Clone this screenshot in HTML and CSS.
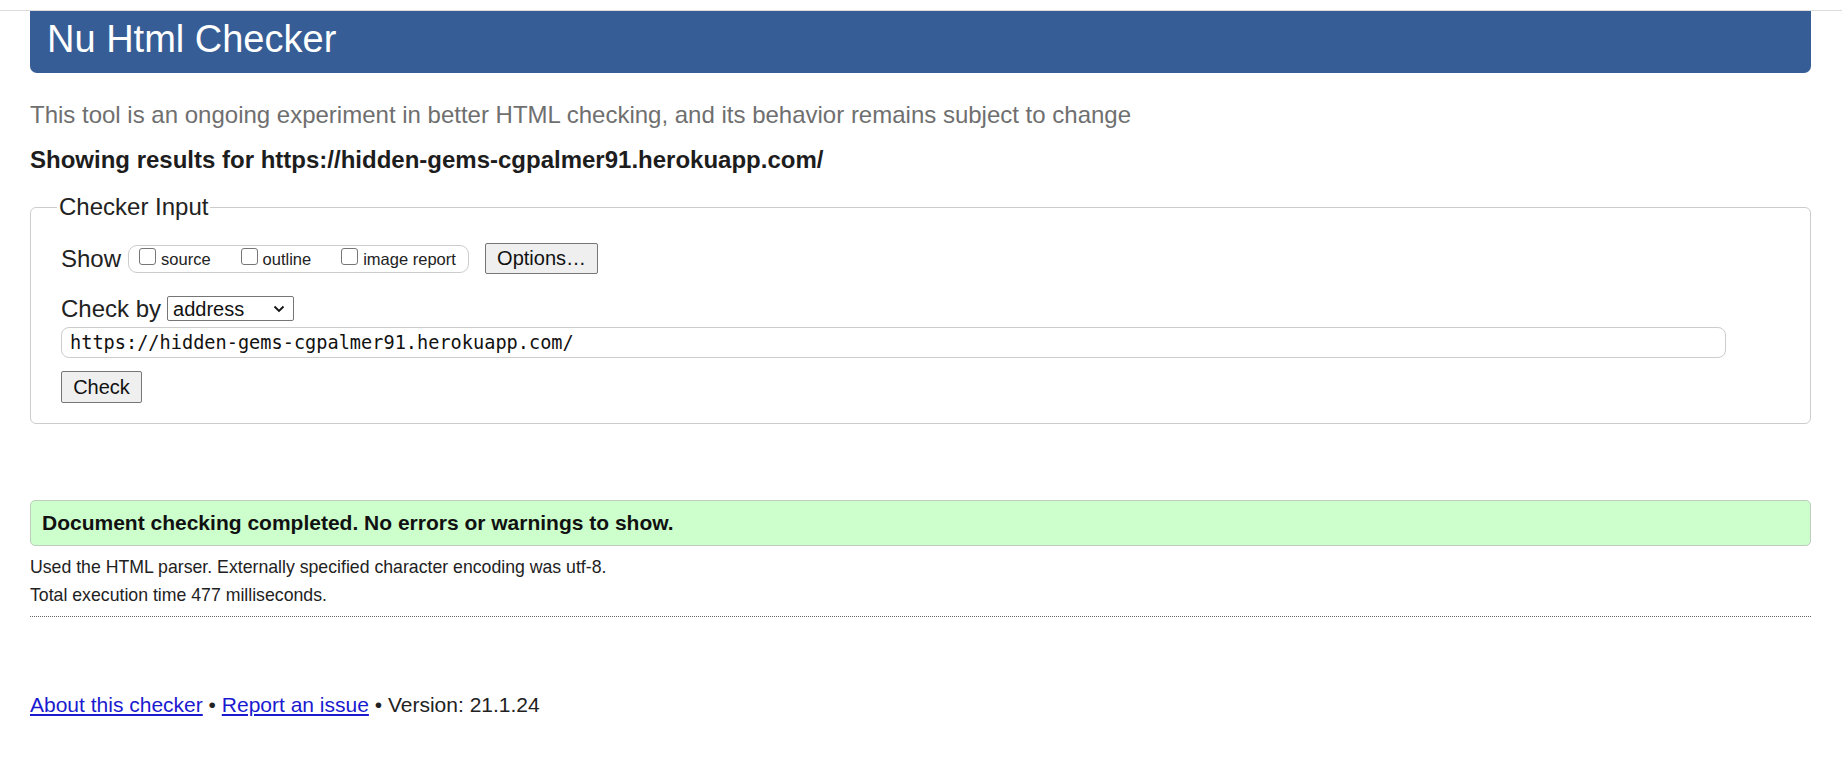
FILE: index.html
```html
<!DOCTYPE html>
<html lang="en">
<head>
<meta charset="utf-8">
<title>Nu Html Checker</title>
<link rel="stylesheet" href="styles.css">
</head>
<body>
<div class="topline"></div>
<div class="page">
  <h1 class="banner">Nu Html Checker</h1>
  <p class="tagline">This tool is an ongoing experiment in better HTML checking, and its behavior remains subject to change</p>
  <p class="showing">Showing results for https://hidden-gems-cgpalmer91.herokuapp.com/</p>

  <fieldset class="checker">
    <legend class="legend">Checker Input</legend>
    <div class="row row-show">
      <span class="row-label">Show</span>
      <span class="checkgroup">
        <label class="opt"><input type="checkbox" class="cb"><span>source</span></label>
        <label class="opt"><input type="checkbox" class="cb"><span>outline</span></label>
        <label class="opt"><input type="checkbox" class="cb"><span>image report</span></label>
      </span>
      <button class="btn btn-options" type="button">Options…</button>
    </div>
    <div class="row row-by">
      <span class="row-label">Check by</span>
      <span class="select-wrap">
        <select class="select"><option>address</option></select>
        <svg class="chev" width="12" height="8" viewBox="0 0 12 8"><path d="M1.5 1.5 L6 6 L10.5 1.5" fill="none" stroke="#111" stroke-width="1.8"/></svg>
      </span>
    </div>
    <input class="url" type="text" value="https://hidden-gems-cgpalmer91.herokuapp.com/">
    <div class="row row-submit">
      <button class="btn btn-check" type="button">Check</button>
    </div>
  </fieldset>

  <div class="success">Document checking completed. No errors or warnings to show.</div>
  <div class="details">
    <p class="detail">Used the HTML parser. Externally specified character encoding was utf-8.</p>
    <p class="detail">Total execution time 477 milliseconds.</p>
  </div>

  <p class="footer"><a href="#">About this checker</a> • <a href="#">Report an issue</a> • Version: 21.1.24</p>
</div>
</body>
</html>
```

FILE: styles.css
```css
html, body {
  margin: 0;
  padding: 0;
  background: #ffffff;
}
body {
  font-family: "Liberation Sans", Arial, sans-serif;
  color: #222222;
}
.topline {
  height: 10px;
  border-bottom: 1px solid #dcdcdc;
}
.page {
  margin: 0 31px 0 30px;
}
.banner {
  margin: 0;
  background: #365d95;
  color: #ffffff;
  font-weight: normal;
  font-size: 38px;
  line-height: 44px;
  padding: 6px 18px 12px 17px;
  border-radius: 0 0 7px 7px;
}
.tagline {
  margin: 27.6px 0 0;
  font-size: 24px;
  color: #6f6f6f;
}
.showing {
  margin: 17.6px 0 0;
  font-size: 24px;
  font-weight: bold;
  color: #1d1d1d;
}
.checker {
  margin: 19px 0 0;
  border: 1px solid #cccccc;
  border-radius: 6px;
  padding: 22px 30px 20px;
}
.legend {
  font-size: 24px;
  padding: 0 2px;
  margin-left: -4px;
  color: #222222;
}
.row {
  display: flex;
  align-items: center;
}
.row-label {
  font-size: 24px;
  margin-right: 7px;
}
.row-show {
  height: 31px;
}
.checkgroup {
  display: flex;
  align-items: center;
  height: 28px;
  box-sizing: border-box;
  border: 1px solid #cccccc;
  border-radius: 9px;
  padding: 0 8px 0 10px;
  width: 341px;
  gap: 30px;
}
.opt {
  display: flex;
  align-items: center;
  font-size: 16.5px;
  color: #222222;
  padding-top: 2px;
}
.cb {
  appearance: none;
  -webkit-appearance: none;
  width: 17px;
  height: 17px;
  margin: 0 5px 0 0;
  border: 1px solid #767676;
  border-radius: 3px;
  background: #ffffff;
  position: relative;
  top: -3px;
}
.btn {
  font-family: "Liberation Sans", Arial, sans-serif;
  font-size: 20px;
  color: #111111;
  background: #efefef;
  border: 1px solid #767676;
  border-radius: 2px;
  box-sizing: border-box;
  padding: 0;
}
.btn-options {
  margin-left: 16px;
  width: 113px;
  height: 31px;
}
.row-by {
  margin-top: 21px;
  height: 27.6px;
}
.row-by .row-label {
  margin-right: 6px;
}
.select-wrap {
  position: relative;
  display: inline-block;
}
.select {
  appearance: none;
  -webkit-appearance: none;
  font-family: "Liberation Sans", Arial, sans-serif;
  font-size: 20px;
  color: #111111;
  width: 127px;
  height: 25px;
  box-sizing: border-box;
  border: 1px solid #767676;
  border-radius: 2px;
  background: #ffffff;
  padding: 0 0 0 5px;
  display: block;
}
.chev {
  position: absolute;
  right: 9px;
  top: 9px;
  pointer-events: none;
}
.url {
  display: block;
  margin-top: 4px;
  width: 1665px;
  height: 31.5px;
  box-sizing: border-box;
  border: 1px solid #cccccc;
  border-radius: 8px;
  padding: 0 8px;
  font-family: "DejaVu Sans Mono", "Liberation Mono", monospace;
  font-size: 18.6px;
  color: #111111;
  background: #ffffff;
}
.row-submit {
  margin-top: 13px;
}
.btn-check {
  width: 81px;
  height: 32px;
}
.success {
  margin-top: 76px;
  height: 46px;
  box-sizing: border-box;
  background: #ccffcc;
  border: 1px solid #bfcdbf;
  border-radius: 5px;
  padding: 0 11px;
  display: flex;
  align-items: center;
  font-size: 21px;
  font-weight: bold;
  color: #111111;
}
.details {
  margin-top: 7px;
  padding-bottom: 6.5px;
  border-bottom: 1px dotted #666666;
}
.detail {
  margin: 0;
  font-size: 17.7px;
  line-height: 28px;
  color: #222222;
}
.footer {
  margin: 76px 0 0;
  font-size: 21px;
  color: #222222;
}
.footer a {
  color: #1a1ad0;
}
```
